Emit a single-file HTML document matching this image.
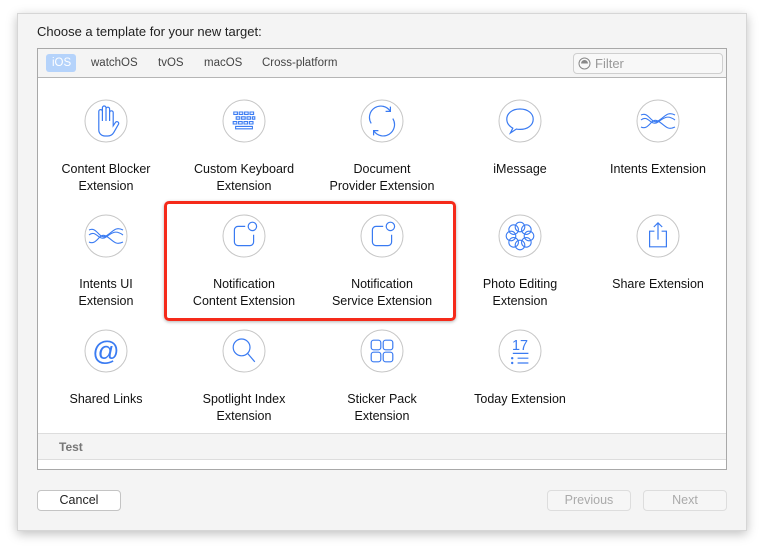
<!DOCTYPE html>
<html><head><style>
*{margin:0;padding:0;box-sizing:border-box}
body{width:764px;height:552px;background:#fff;font-family:"Liberation Sans",sans-serif;position:relative;overflow:hidden}
.dlg{position:absolute;left:17px;top:13px;width:730px;height:518px;background:#f4f4f4;border:1px solid #d6d6d6;box-shadow:0 3px 10px rgba(0,0,0,.25)}
.t{position:absolute;font-size:13px;color:#222}
.box{position:absolute;left:37px;top:48px;width:690px;height:422px;background:#fff;border:1px solid #a8a8a8}
.tabs{position:absolute;left:0;top:0;width:688px;height:29px;background:#f4f4f4;border-bottom:1px solid #b5b5b5}
.tab{position:absolute;top:8px;font-size:11.5px;color:#444}
.item{position:absolute;width:138px;text-align:center;font-size:12.5px;line-height:17px;color:#111}
.item svg{display:block;margin:0 auto 18px}
.g{transform:translate(22px,22px) scale(1.2) translate(-22px,-22px)}
.test{position:absolute;left:0;top:384px;width:688px;height:27px;background:#f4f4f4;border-top:1px solid #ddd;border-bottom:1px solid #ddd;font-size:12px;font-weight:bold;color:#777;padding:6px 0 0 21px}
.btn{position:absolute;top:490px;height:21px;border:1px solid #c4c4c4;border-radius:4px;background:#fff;font-size:12.5px;text-align:center;line-height:19px}
</style></head><body>
<div class="dlg"></div>
<div class="t" style="left:37px;top:24px">Choose a template for your new target:</div>
<div class="box">
 <div class="tabs">
  <div style="position:absolute;left:8px;top:5px;width:30px;height:18px;background:#b5d3fb;border-radius:3px"></div>
  <div class="tab" style="left:14px;color:#fff">iOS</div>
  <div class="tab" style="left:53px">watchOS</div>
  <div class="tab" style="left:120px">tvOS</div>
  <div class="tab" style="left:166px">macOS</div>
  <div class="tab" style="left:224px">Cross-platform</div>
  <div style="position:absolute;left:535px;top:4px;width:150px;height:21px;border:1px solid #cfcfcf;border-radius:4px;background:#f8f8f8"></div>
  <svg style="position:absolute;left:540px;top:8px" width="13" height="13"><circle cx="6.5" cy="6.5" r="5.5" fill="none" stroke="#888"/><path d="M3 6.5a3.5 3.5 0 0 1 7 0z" fill="#888"/></svg>
  <div class="tab" style="left:557px;top:7px;font-size:13px;color:#999">Filter</div>
 </div>
 <div class="test">Test</div>
</div>
<div class="item" style="left:37px;top:99px"><svg width="44" height="44"><circle cx="22" cy="22" r="21" fill="#fff" stroke="#c6c6c6"/><g class="g"><path d="M16 24V14a1.5 1.5 0 0 1 3 0v8V11a1.5 1.5 0 0 1 3 0v11V12a1.5 1.5 0 0 1 3 0v10V15a1.5 1.5 0 0 1 3 0v11l2-3a1.5 1.5 0 0 1 2.5 1.5l-4 7a6 6 0 0 1-5 3h-2a5 5 0 0 1-5.5-5z" fill="none" stroke="#3a7bf2" stroke-width="1"/></g></svg>Content Blocker<br>Extension</div>
<div class="item" style="left:175px;top:99px"><svg width="44" height="44"><circle cx="22" cy="22" r="21" fill="#fff" stroke="#c6c6c6"/><g class="g" fill="none" stroke="#3a7bf2" stroke-width="0.9"><path d="M13.5 14.5h3v2h-3zM18 14.5h3v2h-3zM22.5 14.5h3v2h-3zM27 14.5h3v2h-3zM15.5 18.5h3v2h-3zM20 18.5h3v2h-3zM24.5 18.5h3v2h-3zM29 18.5h2v2h-2zM13 22.5h3v2h-3zM17.5 22.5h3v2h-3zM22 22.5h3v2h-3zM26.5 22.5h3v2h-3zM15 26.5h14v2H15z"/></g></svg>Custom Keyboard<br>Extension</div>
<div class="item" style="left:313px;top:99px"><svg width="44" height="44"><circle cx="22" cy="22" r="21" fill="#fff" stroke="#c6c6c6"/><g class="g" fill="none" stroke="#3a7bf2" stroke-width="1"><path d="M13 24a9 9 0 0 1 16-10"/><path d="M31 20a9 9 0 0 1-16 10"/><path d="M29 10v4h-4M15 34v-4h4"/></g></svg>Document<br>Provider Extension</div>
<div class="item" style="left:451px;top:99px"><svg width="44" height="44"><circle cx="22" cy="22" r="21" fill="#fff" stroke="#c6c6c6"/><g class="g"><path d="M22 12c7 0 11 4 11 8.5S29 29 22 29c-1 0-2 0-3-.3L14 32l2-4c-3-1.7-5-4.2-5-7.5C11 16 15 12 22 12z" fill="none" stroke="#3a7bf2" stroke-width="1"/></g></svg>iMessage</div>
<div class="item" style="left:589px;top:99px"><svg width="44" height="44"><circle cx="22" cy="22" r="21" fill="#fff" stroke="#c6c6c6"/><g fill="none" stroke="#3a7bf2" stroke-width="1.1"><path d="M5 16c8-4 10 10 17 6s9-10 17-6"/><path d="M5 28c8 4 10-10 17-6s9 10 17 6"/><path d="M5 21c7-6 10 7 17 2s10-7 17-2"/></g></svg>Intents Extension</div>
<div class="item" style="left:37px;top:214px"><svg width="44" height="44"><circle cx="22" cy="22" r="21" fill="#fff" stroke="#c6c6c6"/><g fill="none" stroke="#3a7bf2" stroke-width="1.1"><path d="M5 16c8-4 10 10 17 6s9-10 17-6"/><path d="M5 28c8 4 10-10 17-6s9 10 17 6"/><path d="M5 21c7-6 10 7 17 2s10-7 17-2"/></g></svg>Intents UI<br>Extension</div>
<div class="item" style="left:175px;top:214px"><svg width="44" height="44"><circle cx="22" cy="22" r="21" fill="#fff" stroke="#c6c6c6"/><g class="g" fill="none" stroke="#3a7bf2" stroke-width="1"><path d="M23 14h-6a3 3 0 0 0-3 3v10a3 3 0 0 0 3 3h10a3 3 0 0 0 3-3v-6"/><circle cx="29" cy="14" r="3.5"/></g></svg>Notification<br>Content Extension</div>
<div class="item" style="left:313px;top:214px"><svg width="44" height="44"><circle cx="22" cy="22" r="21" fill="#fff" stroke="#c6c6c6"/><g class="g" fill="none" stroke="#3a7bf2" stroke-width="1"><path d="M23 14h-6a3 3 0 0 0-3 3v10a3 3 0 0 0 3 3h10a3 3 0 0 0 3-3v-6"/><circle cx="29" cy="14" r="3.5"/></g></svg>Notification<br>Service Extension</div>
<div class="item" style="left:451px;top:214px"><svg width="44" height="44"><circle cx="22" cy="22" r="21" fill="#fff" stroke="#c6c6c6"/><g class="g" fill="none" stroke="#3a7bf2" stroke-width="0.9"><circle cx="22" cy="14.5" r="4"/><circle cx="22" cy="29.5" r="4"/><circle cx="14.5" cy="22" r="4"/><circle cx="29.5" cy="22" r="4"/><circle cx="16.7" cy="16.7" r="4"/><circle cx="27.3" cy="16.7" r="4"/><circle cx="16.7" cy="27.3" r="4"/><circle cx="27.3" cy="27.3" r="4"/></g></svg>Photo Editing<br>Extension</div>
<div class="item" style="left:589px;top:214px"><svg width="44" height="44"><circle cx="22" cy="22" r="21" fill="#fff" stroke="#c6c6c6"/><g class="g" fill="none" stroke="#3a7bf2" stroke-width="1"><path d="M19 18h-4v13h14V18h-4M22 25V11M18.5 14.5 22 11l3.5 3.5"/></g></svg>Share Extension</div>
<div class="item" style="left:37px;top:329px"><svg width="44" height="44"><circle cx="22" cy="22" r="21" fill="#fff" stroke="#c6c6c6"/><text x="22" y="31" text-anchor="middle" font-family="Liberation Sans" font-size="27" fill="#3a7bf2">@</text></svg>Shared Links</div>
<div class="item" style="left:175px;top:329px"><svg width="44" height="44"><circle cx="22" cy="22" r="21" fill="#fff" stroke="#c6c6c6"/><g class="g" fill="none" stroke="#3a7bf2" stroke-width="1"><circle cx="20" cy="19" r="7"/><path d="M25 24l6 7"/></g></svg>Spotlight Index<br>Extension</div>
<div class="item" style="left:313px;top:329px"><svg width="44" height="44"><circle cx="22" cy="22" r="21" fill="#fff" stroke="#c6c6c6"/><g class="g" fill="none" stroke="#3a7bf2" stroke-width="1"><rect x="13" y="13" width="8" height="8" rx="2"/><rect x="23" y="13" width="8" height="8" rx="2"/><rect x="13" y="23" width="8" height="8" rx="2"/><rect x="23" y="23" width="8" height="8" rx="2"/></g></svg>Sticker Pack<br>Extension</div>
<div class="item" style="left:451px;top:329px"><svg width="44" height="44"><circle cx="22" cy="22" r="21" fill="#fff" stroke="#c6c6c6"/><g class="g"><text x="22" y="21" text-anchor="middle" font-family="Liberation Sans" font-size="12" fill="#3a7bf2">17</text><g stroke="#3a7bf2" stroke-width="1"><path d="M16 24h13M20 28h9M20 32h9"/></g><circle cx="15.5" cy="28" r="1" fill="#3a7bf2"/><circle cx="15.5" cy="32" r="1" fill="#3a7bf2"/></g></svg>Today Extension</div>
<div style="position:absolute;left:164px;top:201px;width:292px;height:120px;border:3px solid #f52a1a;border-radius:5px;box-shadow:0 1px 3px rgba(0,0,0,.3)"></div>
<div class="btn" style="left:37px;width:84px;color:#222">Cancel</div>
<div class="btn" style="left:547px;width:84px;color:#aaa;background:#f6f6f6;border-color:#ddd">Previous</div>
<div class="btn" style="left:643px;width:84px;color:#aaa;background:#f6f6f6;border-color:#ddd">Next</div>
</body></html>
